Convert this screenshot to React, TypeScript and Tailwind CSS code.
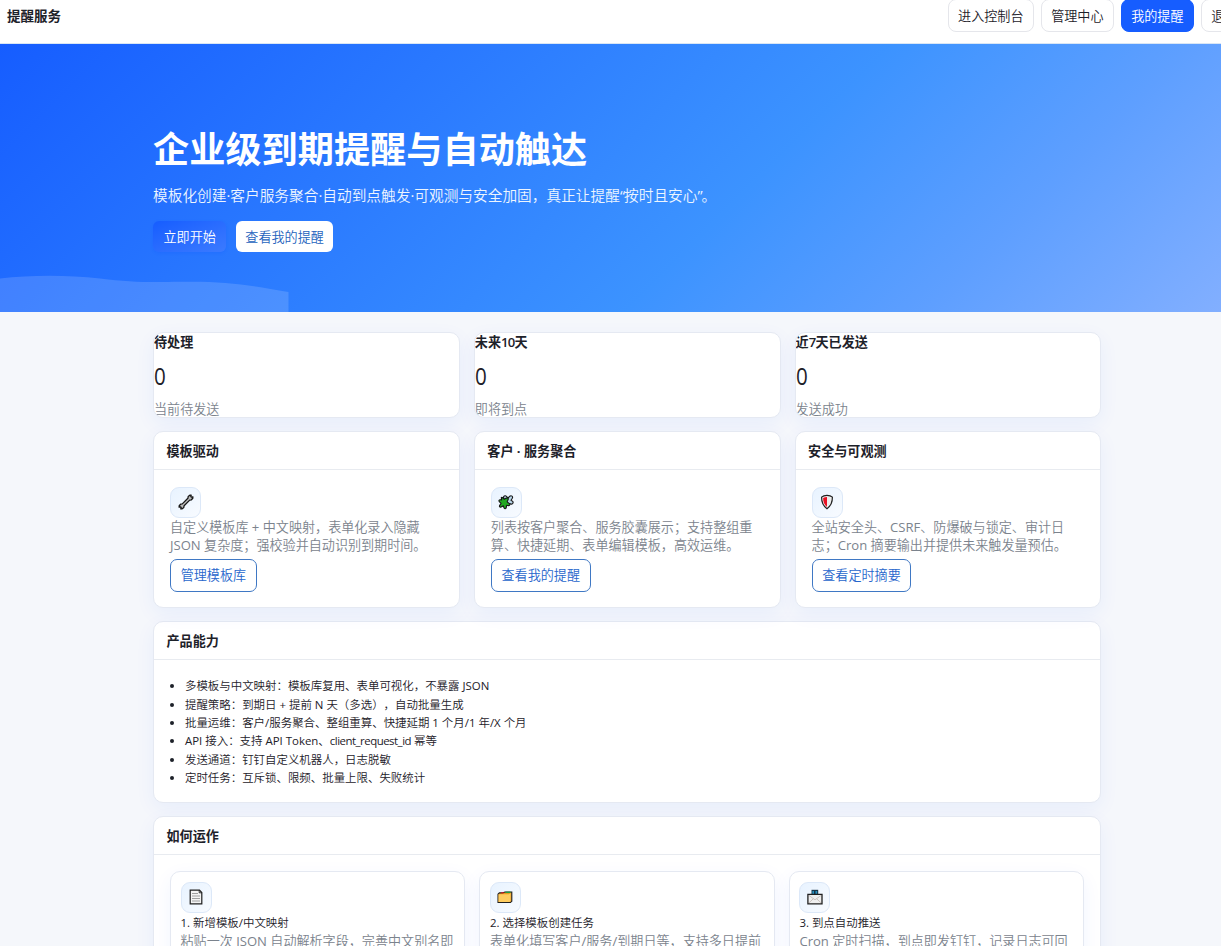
import React from 'react';
import { clsx } from 'clsx';

/* ---------- icons ---------- */

const WrenchIcon = () => (
  <svg width="16" height="16" viewBox="0 0 16 16">
    <path
      d="M9.9 4.3 10.2 2.6 11.8 1.2 13.2 1.1 12.8 2.5 13.5 3.2 14.9 2.8 14.8 4.2 13.4 5.8 11.7 6.1 6.1 11.7 5.8 13.4 4.2 14.8 2.8 14.9 3.2 13.5 2.5 12.8 1.1 13.2 1.2 11.8 2.6 10.2 4.3 9.9Z"
      fill="#bdbdbd"
      stroke="#171717"
      strokeWidth="1.3"
      strokeLinejoin="round"
    />
  </svg>
);

const PuzzleIcon = () => (
  <svg width="16" height="16" viewBox="0 0 16 16">
    <path
      d="M6 4.6C4.6 2.3 7.3.7 8.7 2.7L10 4.2 11.8 2.2C13.3 1 15.3 2.6 14.3 4.3L13 6.2 14.7 7.4C15.9 9.1 13.9 10.8 12.5 9.7L9 10Z"
      fill="#b9d6ea"
      stroke="#171717"
      strokeWidth="1.1"
      strokeLinejoin="round"
    />
    <path
      d="M3.3 3.5C4.6 3 5.5 4.2 6.2 5.2 7.5 4.7 8.5 3.3 9.7 4 11.2 5 9.5 6.5 9.2 7.7 10 9 12.4 9.5 11.7 11 11 12.2 9.6 11.4 8.6 11.3 8.2 12.5 8.9 14.5 7.3 14.7 5.7 14.9 5.9 12.9 5.3 11.9 4 12.2 2.9 13.9 1.7 12.9.6 11.8 2.7 10.5 3 9.3 2.3 8.2.5 7.8 1 6.4 1.5 5.2 2.8 6 3.6 5.9Z"
      fill="#21a821"
      stroke="#171717"
      strokeWidth="1.1"
      strokeLinejoin="round"
    />
  </svg>
);

const ShieldIcon = () => (
  <svg width="16" height="16" viewBox="0 0 16 16">
    <path
      d="M8 1.4C10 1.4 12.2 2 13.4 3.1 13.5 8.3 11.8 12.1 8 14.7 4.2 12.1 2.5 8.3 2.6 3.1 3.8 2 6 1.4 8 1.4Z"
      fill="#f5f5f5"
      stroke="#202020"
      strokeWidth="1.2"
    />
    <path d="M8 3C6.5 3 5.1 3.3 4.1 3.9 4.1 7.8 5.3 10.8 8 13Z" fill="#e81123" />
    <path d="M8 3C9.5 3 10.9 3.3 11.9 3.9 11.9 7.8 10.7 10.8 8 13Z" fill="#ececec" />
  </svg>
);

const PageIcon = () => (
  <svg width="16" height="16" viewBox="0 0 16 16">
    <path d="M2.2 1.2H11.5L13.8 3.5V14.8H2.2Z" fill="#f4f4f4" stroke="#202020" strokeWidth="1.2" />
    <path d="M11.2 1.2V3.8H13.8" fill="none" stroke="#202020" strokeWidth="0.9" />
    <path d="M4 4.5H10M4 7H12M4 9.5H12M4 12H12" stroke="#969696" strokeWidth="0.9" />
  </svg>
);

const FolderIcon = () => (
  <svg width="16" height="16" viewBox="0 0 16 16">
    <path d="M1 5.2 2.4 3.9 6 3.7 8 3H14.8V12.3L13.4 13.5H1Z" fill="#e99a1f" stroke="#202020" strokeWidth="1.1" />
    <path d="M4.2 3.8H6.8" stroke="#e81123" strokeWidth="1" />
    <path d="M8.5 3.3H13.5" stroke="#16a54b" strokeWidth="1.2" />
    <path d="M1.5 5.3H11.8L13.6 4.3V12.3L12.5 13.1H1.5Z" fill="#ffcd60" />
  </svg>
);

const OutboxIcon = () => (
  <svg width="16" height="16" viewBox="0 0 16 16">
    <path d="M4.5.8H11.2V6H4.5Z" fill="#173447" />
    <path d="M5.4 2H7V5H5.4ZM8.5 2H10.2V5H8.5Z" fill="#2790bf" />
    <path d="M.9 5.4H15V14.8H.9Z" fill="#efefef" stroke="#202020" strokeWidth="1.3" />
    <path d="M2 6.5 8 10.8 14 6.5M2 13.8 6.3 9.8M14 13.8 9.7 9.8" fill="none" stroke="#c2b7b3" strokeWidth="0.8" />
  </svg>
);

/* ---------- data ---------- */

const stats = [
  { title: <>待处理</>, value: 0, hint: '当前待发送' },
  { title: <>未来<span className="font-semibold tracking-[-0.7px]">10</span>天</>, value: 0, hint: '即将到点' },
  { title: <>近<span className="font-semibold tracking-[-0.7px]">7</span>天已发送</>, value: 0, hint: '发送成功' },
];

const features = [
  {
    title: '模板驱动',
    icon: <WrenchIcon />,
    lines: ['自定义模板库 + 中文映射，表单化录入隐藏', 'JSON 复杂度；强校验并自动识别到期时间。'],
    action: '管理模板库',
  },
  {
    title: '客户 · 服务聚合',
    icon: <PuzzleIcon />,
    lines: ['列表按客户聚合、服务胶囊展示；支持整组重', '算、快捷延期、表单编辑模板，高效运维。'],
    action: '查看我的提醒',
  },
  {
    title: '安全与可观测',
    icon: <ShieldIcon />,
    lines: ['全站安全头、CSRF、防爆破与锁定、审计日', '志；Cron 摘要输出并提供未来触发量预估。'],
    action: '查看定时摘要',
  },
];

const abilities: React.ReactNode[] = [
  '多模板与中文映射：模板库复用、表单可视化，不暴露 JSON',
  '提醒策略：到期日 + 提前 N 天（多选），自动批量生成',
  '批量运维：客户/服务聚合、整组重算、快捷延期 1 个月/1 年/X 个月',
  <>API 接入：支持 API Token、<span className="tracking-[-0.5px]">client_request_id</span> 幂等</>,
  '发送通道：钉钉自定义机器人，日志脱敏',
  '定时任务：互斥锁、限频、批量上限、失败统计',
];

const steps = [
  { title: '1. 新增模板/中文映射', icon: <PageIcon />, desc: '粘贴一次 JSON 自动解析字段，完善中文别名即' },
  { title: '2. 选择模板创建任务', icon: <FolderIcon />, desc: '表单化填写客户/服务/到期日等，支持多日提前' },
  { title: '3. 到点自动推送', icon: <OutboxIcon />, desc: 'Cron 定时扫描，到点即发钉钉，记录日志可回' },
];

/* ---------- pieces ---------- */

const Card: React.FC<{ className?: string; children: React.ReactNode }> = ({ className, children }) => (
  <section
    className={clsx(
      'rounded-[10px] border border-[#e5e9f2] bg-white shadow-[0_6px_20px_rgba(22,93,255,0.06)]',
      className,
    )}
  >
    {children}
  </section>
);

const CardHeader: React.FC<{ children: React.ReactNode }> = ({ children }) => (
  <h3 className="h-[38px] border-b border-[#e8ebf0] px-[12.5px] font-['Open_Sans','Noto_Sans_CJK_SC',sans-serif] font-bold leading-[38px]">
    {children}
  </h3>
);

const IconTile: React.FC<{ children: React.ReactNode }> = ({ children }) => (
  <div className="flex size-[31px] items-center justify-center rounded-[9px] border border-[#dce8f8] bg-linear-to-br from-[#e8f3ff] to-[#f8fbff]">
    {children}
  </div>
);

const NavButton: React.FC<{ active?: boolean; children: React.ReactNode }> = ({ active, children }) => (
  <button
    className={clsx(
      'h-[33px] shrink-0 whitespace-nowrap rounded-lg border px-[9.2px] leading-[30px]',
      active ? 'border-[#165dff] bg-[#165dff] text-white' : 'border-[#e5e6eb] bg-white',
    )}
  >
    {children}
  </button>
);

const App: React.FC = () => (
  <div className="h-[946px] overflow-hidden bg-[#f5f7fb] font-['Open_Sans','Noto_Sans_CJK_SC_DemiLight','Noto_Sans_CJK_SC',sans-serif] text-[13.09px] leading-[18px] text-[#1d2129] [text-spacing-trim:space-all]">
    <header className="h-11 overflow-hidden border-b border-[#d9e6f5] bg-white">
      <div className="-mt-px flex w-[1247.5px] items-center justify-between pl-[7px]">
        <span className="font-['Open_Sans','Noto_Sans_CJK_SC',sans-serif] text-[13.5px] font-bold">提醒服务</span>
        <nav className="flex gap-[7.3px]">
          <NavButton>进入控制台</NavButton>
          <NavButton>管理中心</NavButton>
          <NavButton active>我的提醒</NavButton>
          <NavButton>退出</NavButton>
        </nav>
      </div>
    </header>

    <div className="relative h-[268px] bg-[linear-gradient(135deg,#165dff_0%,#3c93ff_60%,#5e9fff_80%,#82afff_100%)] text-white">
      <svg className="absolute bottom-0 left-0" width="289" height="37" viewBox="0 0 289 37">
        <path d="M0 3.5C30 0 65-.5 100 3.5C130 7 145 7.5 180 6.8C225 6 250 10 288.5 17V37H0Z" fill="white" fillOpacity="0.15" />
      </svg>
      <div className="relative ml-[153px] pt-[82px]">
        <h1 className="font-['Open_Sans','Noto_Sans_CJK_SC',sans-serif] text-[36.2px] font-bold leading-[46px]">
          企业级到期提醒与自动触达
        </h1>
        <p className="mt-[12px] text-[14.7px] leading-[22px] text-[#edf5ff]">
          模板化创建·客户服务聚合·自动到点触发·可观测与安全加固，真正让提醒<span className="tracking-[-1px]">“</span>按时且安心
          <span className="tracking-[-1px]">”</span>。
        </p>
        <div className="mt-[15px] flex gap-[9.5px]">
          <button className="h-[31px] rounded-md bg-linear-to-br from-[#165dff] to-[#3b7aff] px-[10.5px] shadow-[0_1px_3px_rgba(22,93,255,0.3)]">
            立即开始
          </button>
          <button className="h-[31px] rounded-md bg-white px-[9.5px] text-[#2463bd]">查看我的提醒</button>
        </div>
      </div>
    </div>

    <main className="ml-[153px] mt-5 w-[948.4px]">
      <div className="grid grid-cols-3 gap-[14px]">
        {stats.map((s) => (
          <Card key={s.hint} className="h-[86px] overflow-hidden">
            <div className="font-['Open_Sans','Noto_Sans_CJK_SC',sans-serif] font-bold leading-[19px]">{s.title}</div>
            <div className="mt-[7px] w-fit origin-left scale-x-90 text-[22.9px] leading-[35px]">{s.value}</div>
            <div className="mt-[5px] leading-[20px] text-[#7b838d]">{s.hint}</div>
          </Card>
        ))}
      </div>

      <div className="mt-[13.4px] grid grid-cols-3 gap-[14px]">
        {features.map((f) => (
          <Card key={f.title} className="h-[177px]">
            <CardHeader>{f.title}</CardHeader>
            <div className="px-4 pt-[16.2px]">
              <IconTile>{f.icon}</IconTile>
              <div className="whitespace-nowrap text-[#7b838d]">
                {f.lines.map((line) => (
                  <p key={line}>{line}</p>
                ))}
              </div>
              <button className="mt-[5px] h-[33px] rounded-[7px] border border-[#3f78c4] px-[9.7px] text-[#2766cc]">
                {f.action}
              </button>
            </div>
          </Card>
        ))}
      </div>

      <Card className="mt-[13px] h-[182px]">
        <CardHeader>产品能力</CardHeader>
        <ul className="list-disc pl-[31px] pt-[16.8px] text-[11.45px] leading-[18.35px]">
          {abilities.map((a, i) => (
            <li key={i}>{a}</li>
          ))}
        </ul>
      </Card>

      <Card className="mt-[13px] h-[240px]">
        <CardHeader>如何运作</CardHeader>
        <div className="grid grid-cols-3 gap-[14px] px-4 pt-4">
          {steps.map((s) => (
            <Card key={s.title} className="h-[130px] px-[9.5px] pt-[9.5px]">
              <IconTile>{s.icon}</IconTile>
              <p className="mt-px text-[11.45px]">{s.title}</p>
              <p className="whitespace-nowrap text-[#7b838d]">{s.desc}</p>
            </Card>
          ))}
        </div>
      </Card>
    </main>
  </div>
);

export default App;
